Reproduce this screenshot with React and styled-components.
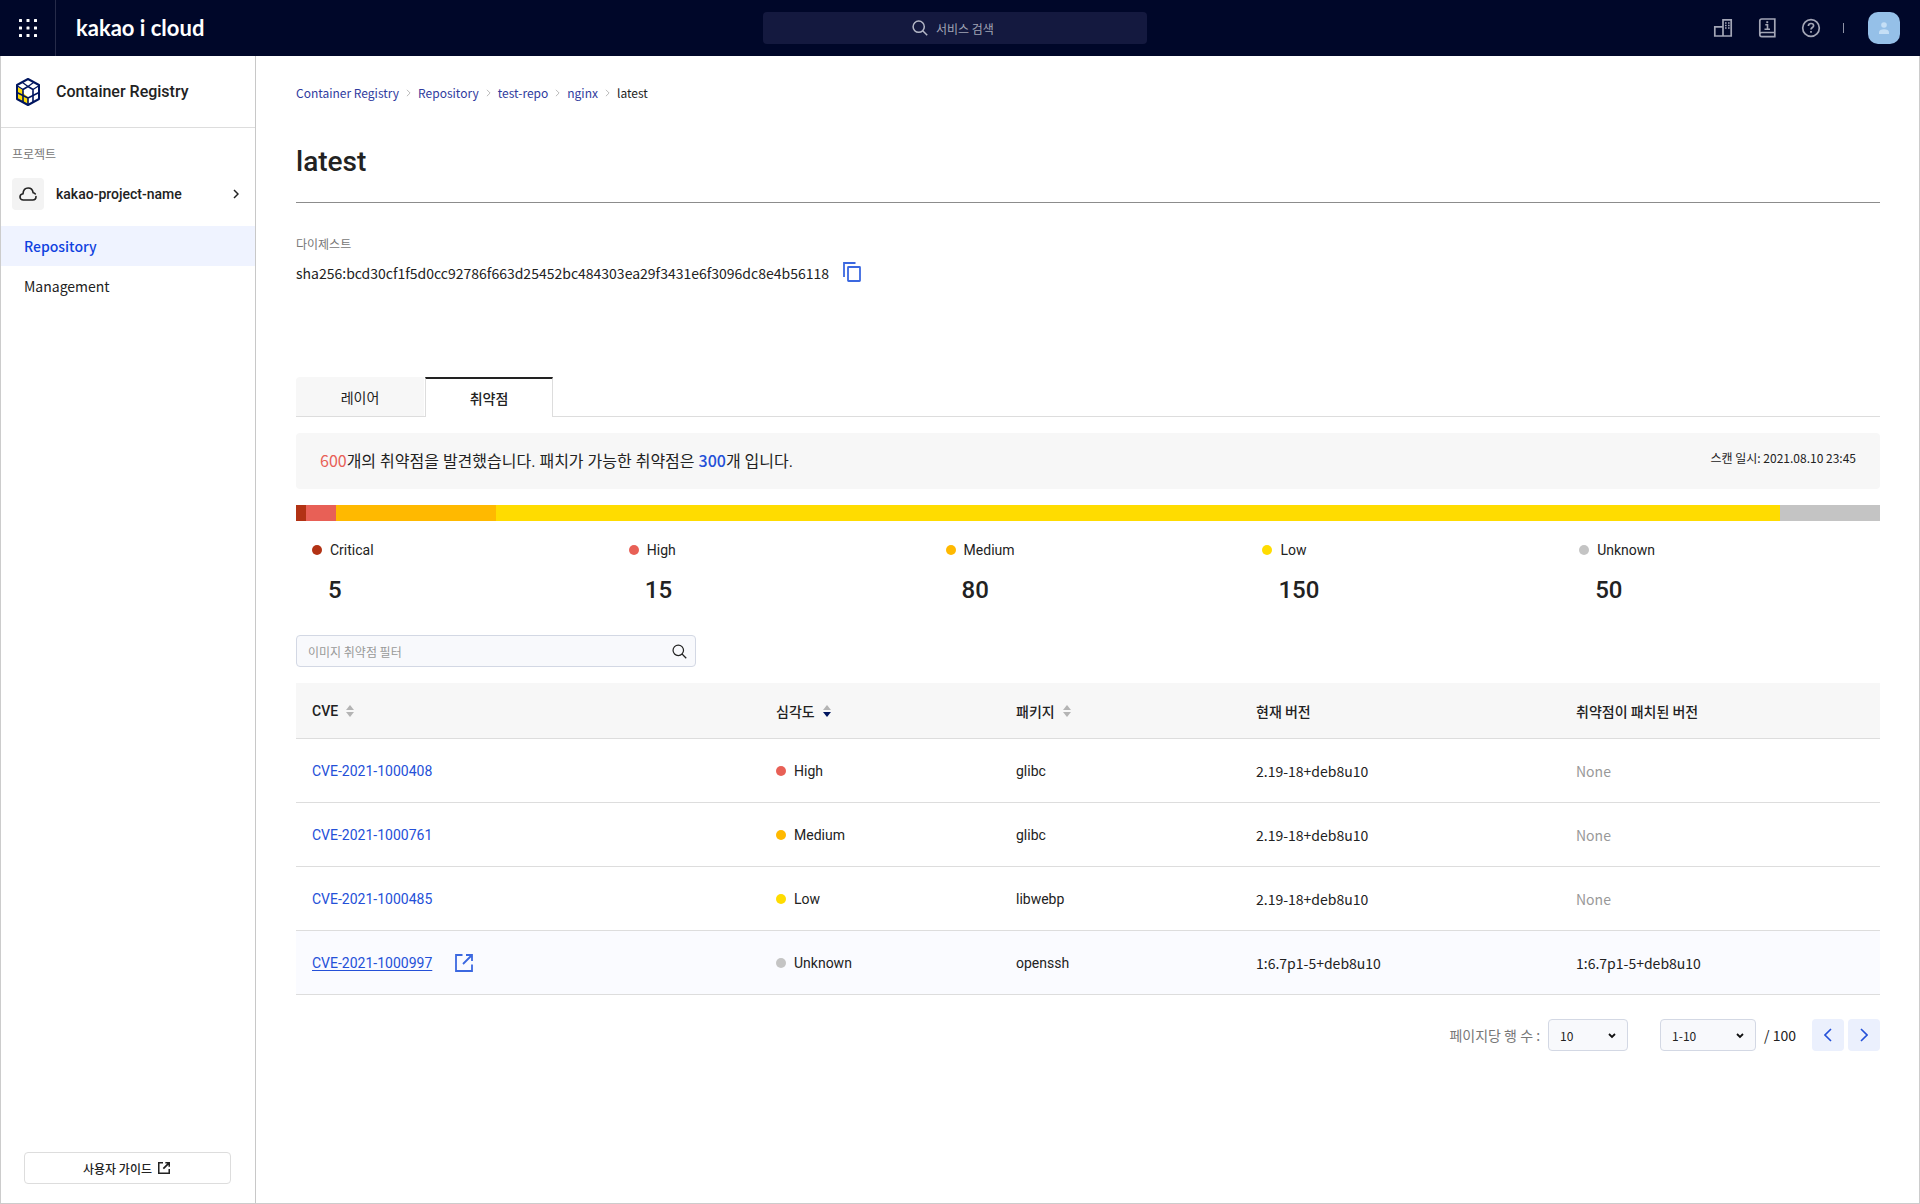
import React, { useState } from 'react';
import styled, { createGlobalStyle } from 'styled-components';

const noto = `'Noto Sans CJK KR', 'Noto Sans', sans-serif`;
const roboto = `Roboto, 'Noto Sans CJK KR', sans-serif`;

const GlobalStyle = createGlobalStyle`
  * {
    box-sizing: border-box;
  }
  body {
    margin: 0;
    color: #222;
    background: #fff;
    font-family: ${noto};
    font-size: 14px;
    line-height: 20px;
  }
  button, input, select {
    font-family: inherit;
    color: inherit;
  }
  svg {
    display: block;
    flex: none;
  }
`;

const Page = styled.div`
  display: flex;
  flex-direction: column;
  min-height: 100vh;
`;

/* top bar */
const Header = styled.header`
  display: grid;
  grid-template-columns: 1fr 384px 1fr;
  align-items: center;
  height: 56px;
  padding-right: 10px;
  background: #000729;
  color: #fff;
`;
const Brand = styled.div`
  display: flex;
  align-items: center;
  height: 56px;
`;
const AppsButton = styled.button`
  display: flex;
  align-items: center;
  justify-content: center;
  width: 56px;
  height: 56px;
  padding: 0;
  border: 0;
  border-right: 1px solid #262b49;
  background: none;
`;
const Logo = styled.a`
  margin-left: 20px;
  font-family: Lato, sans-serif;
  font-size: 22px;
  font-weight: 700;
  line-height: 28px;
  color: #fff;
  text-decoration: none;
`;
const SearchBox = styled.label`
  display: flex;
  align-items: center;
  justify-content: center;
  gap: 8px;
  height: 32px;
  border-radius: 4px;
  background: #14193f;
  color: #b4b7c6;
`;
const SearchInput = styled.input`
  width: 62px;
  padding: 0;
  border: 0;
  outline: 0;
  background: none;
  font-size: 12px;
  &::placeholder {
    color: #a1a4b5;
  }
`;
const Tools = styled.div`
  display: flex;
  align-items: center;
  justify-content: flex-end;
  gap: 24px;
  padding-right: 10px;
`;
const ToolButton = styled.button`
  width: 20px;
  height: 20px;
  padding: 0;
  border: 0;
  background: none;
  color: #a3a6b6;
`;
const Separator = styled.span`
  width: 1px;
  height: 10px;
  margin-left: -2px;
  background: #8f93a6;
`;
const Avatar = styled.button`
  display: flex;
  align-items: center;
  justify-content: center;
  width: 32px;
  height: 32px;
  padding: 0;
  border: 0;
  border-radius: 10px;
  background: #95c0e8;
`;

const Body = styled.div`
  display: flex;
  flex: 1;
  border: 1px solid #ccc;
  border-top: 0;
`;

/* side menu */
const Sidebar = styled.aside`
  display: flex;
  flex-direction: column;
  flex: none;
  width: 255px;
  border-right: 1px solid #c8c8c8;
`;
const ServiceTitle = styled.div`
  display: flex;
  align-items: center;
  gap: 16px;
  height: 72px;
  padding-left: 15px;
  border-bottom: 1px solid #ddd;
  font-family: ${roboto};
  font-size: 16px;
  font-weight: 500;
`;
const ProjectLabel = styled.span`
  margin: 16px 0 14px 11px;
  font-size: 12px;
  color: #777;
`;
const ProjectButton = styled.button`
  display: flex;
  align-items: center;
  gap: 12px;
  margin-bottom: 16px;
  padding: 0 16px 0 11px;
  border: 0;
  background: none;
  font-family: ${roboto};
  font-size: 14px;
  font-weight: 500;
  line-height: 20px;
  text-align: left;
`;
const ProjectIcon = styled.span`
  display: flex;
  align-items: center;
  justify-content: center;
  width: 32px;
  height: 32px;
  border-radius: 4px;
  background: #f3f3f3;
`;
const ProjectName = styled.span`
  flex: 1;
`;
const MenuItem = styled.a`
  padding: 10px 23px;
  font-size: 14px;
  font-weight: ${(props) => (props.$active ? 500 : 400)};
  color: ${(props) => (props.$active ? '#0f42e0' : '#222')};
  background: ${(props) => (props.$active ? '#eff3ff' : 'none')};
  text-decoration: none;
`;
const GuideButton = styled.button`
  display: flex;
  align-items: center;
  justify-content: center;
  gap: 6px;
  height: 32px;
  margin: auto 24px 19px 23px;
  padding: 0 8px 0 6px;
  border: 1px solid #ddd;
  border-radius: 4px;
  background: #fff;
  font-size: 12px;
  font-weight: 500;
`;

/* content */
const Main = styled.main`
  flex: 1;
  min-width: 0;
  padding: 28px 39px 28px 40px;
`;
const Breadcrumb = styled.nav`
  display: flex;
  align-items: center;
  gap: 7px;
  font-size: 12px;
  line-height: 18px;
`;
const Crumb = styled.a`
  color: #2f3b9e;
  text-decoration: none;
`;
const Title = styled.h1`
  margin: 0;
  padding: 40px 0 20px;
  border-bottom: 1px solid #8c8c8c;
  font-family: ${roboto};
  font-size: 28px;
  font-weight: 500;
  line-height: 40px;
`;
const Digest = styled.div`
  margin: 32px 0 92px;
`;
const DigestLabel = styled.div`
  margin-bottom: 8px;
  font-size: 12px;
  line-height: 18px;
  color: #777;
`;
const DigestValue = styled.div`
  display: flex;
  align-items: center;
  gap: 14px;
  height: 24px;
`;
const CopyButton = styled.button`
  padding: 0 0 2px;
  border: 0;
  background: none;
`;

const Tabs = styled.div`
  display: flex;
  gap: 1px;
  height: 40px;
  margin-bottom: 16px;
  border-bottom: 1px solid #ddd;
`;
const Tab = styled.button`
  width: 128px;
  height: ${(props) => (props.$active ? 40 : 39)}px;
  padding: 0;
  border: solid #ddd;
  border-width: ${(props) => (props.$active ? '2px 1px 0' : '0')};
  border-top-color: #222;
  border-radius: ${(props) => (props.$active ? '0' : '4px 0 0 0')};
  background: ${(props) => (props.$active ? '#fff' : '#f7f7f7')};
  font-size: 14px;
  font-weight: ${(props) => (props.$active ? 500 : 400)};
`;

const Banner = styled.div`
  display: flex;
  align-items: center;
  justify-content: space-between;
  height: 56px;
  margin-bottom: 16px;
  padding: 0 24px;
  border-radius: 4px;
  background: #f7f7f7;
`;
const BannerText = styled.span`
  font-family: ${roboto};
  font-size: 16px;
`;
const Count = styled.span`
  color: ${(props) => props.$color};
  font-family: ${noto};
  font-weight: ${(props) => (props.$strong ? 500 : 400)};
`;
const ScanDate = styled.span`
  padding-bottom: 6px;
  font-size: 12px;
`;

const Bar = styled.div`
  display: flex;
  height: 16px;
`;
const Segment = styled.div`
  flex: ${(props) => props.$grow} 1 0;
  background: ${(props) => props.$color};
`;
const Summary = styled.div`
  display: grid;
  grid-template-columns: repeat(5, 1fr);
  padding: 19px 0 28px;
  font-family: ${roboto};
`;
const SummaryItem = styled.div`
  padding-left: 16px;
`;
const Severity = styled.span`
  display: flex;
  align-items: center;
  gap: 8px;
  font-family: ${roboto};
`;
const Dot = styled.i`
  width: 10px;
  height: 10px;
  border-radius: 50%;
  background: ${(props) => props.$color};
`;
const SummaryCount = styled.div`
  margin-top: 13px;
  padding-left: 16px;
  font-size: 24px;
  font-weight: 500;
  line-height: 34px;
`;

const Filter = styled.label`
  display: flex;
  align-items: center;
  width: 400px;
  height: 32px;
  margin-bottom: 16px;
  padding: 0 8px 0 11px;
  border: 1px solid #d3d8e4;
  border-radius: 4px;
  background: #f8f9fc;
`;
const FilterInput = styled.input`
  flex: 1;
  padding: 0;
  border: 0;
  outline: 0;
  background: none;
  font-size: 12px;
  &::placeholder {
    color: #999;
  }
`;

const Table = styled.table`
  width: 100%;
  table-layout: fixed;
  border-spacing: 0;
`;
const Th = styled.th`
  width: ${(props) => (props.$width ? `${props.$width}px` : 'auto')};
  height: 56px;
  padding: 0 16px;
  border-bottom: 1px solid #ddd;
  background: #f7f7f7;
  font-family: ${(props) => (props.$latin ? roboto : noto)};
  font-size: 14px;
  font-weight: 500;
  text-align: left;
`;
const SortButton = styled.button`
  display: flex;
  align-items: center;
  gap: 8px;
  padding: 0;
  border: 0;
  background: none;
  font: inherit;
  line-height: 20px;
`;
const Tr = styled.tr`
  background: ${(props) => (props.$active ? '#fafbff' : '#fff')};
`;
const Td = styled.td`
  height: 64px;
  padding: 0 16px;
  border-bottom: 1px solid #ddd;
  font-family: ${(props) => (props.$latin ? roboto : noto)};
  color: ${(props) => (props.$muted ? '#999' : '#222')};
`;
const CveCell = styled.div`
  display: flex;
  align-items: center;
  gap: 23px;
`;
const CveLink = styled.a`
  color: #2450d8;
  text-decoration: ${(props) => (props.$active ? 'underline' : 'none')};
  text-underline-offset: 2px;
`;

const Pagination = styled.div`
  display: flex;
  align-items: center;
  justify-content: flex-end;
  gap: 8px;
  margin-top: 24px;
`;
const RowsLabel = styled.label`
  color: #777;
`;
const SelectWrap = styled.span`
  position: relative;
  width: ${(props) => props.$width}px;
  svg {
    position: absolute;
    top: 14px;
    right: 12px;
    pointer-events: none;
  }
`;
const RowsSelect = styled(SelectWrap)`
  margin-right: 24px;
`;
const Select = styled.select`
  display: block;
  appearance: none;
  width: 100%;
  height: 32px;
  padding: 0 11px;
  border: 1px solid #d3d8e4;
  border-radius: 4px;
  background: #f8f9fc;
  font-size: 12px;
`;
const Pager = styled.div`
  display: flex;
  gap: 4px;
  margin-left: 8px;
`;
const PageButton = styled.button`
  display: flex;
  align-items: center;
  justify-content: center;
  width: 32px;
  height: 32px;
  padding: 0;
  border: 0;
  border-radius: 4px;
  background: #ebf0fd;
`;

const AppsIcon = () => (
  <svg width="18" height="18" viewBox="0 0 18 18" fill="#fff">
    {[0, 7.5, 15].map((y) =>
      [0, 7.5, 15].map((x) => <rect key={`${x}-${y}`} x={x} y={y} width="3" height="3" rx="0.5" />)
    )}
  </svg>
);

const SearchIcon = ({ size, width }) => (
  <svg width={size} height={size} viewBox="0 0 16 16" fill="none" stroke="currentColor" strokeWidth={width}>
    <circle cx="6.7" cy="6.7" r="5.6" />
    <path d="M10.7 10.7l4.5 4.5" />
  </svg>
);

const BuildingIcon = () => (
  <svg width="20" height="20" viewBox="0 0 20 20" fill="none" stroke="currentColor" strokeWidth="1.7">
    <path d="M10 18V1.8h8.2V18H1.8V8.8H10" />
    <path d="M12 5h1.6M15 5h1.6M12 7.5h1.6M15 7.5h1.6M12 10h1.6M15 10h1.6" strokeWidth="1.3" />
  </svg>
);

const BookIcon = () => (
  <svg width="20" height="20" viewBox="0 0 20 20" fill="none" stroke="currentColor" strokeWidth="1.7">
    <path d="M2.8 16V3c0-1.3.7-2 2-2h13v13.500H4.800c-1.200 0-2 .7-2 2s.8 2.200 2 2.200h13v-4.500" />
    <path d="M8.300 6.800h2.200V11M7.500 11.300h5.500" strokeWidth="1.600" />
    <path d="M9.300 4.200h1.900" strokeWidth="1.900" />
  </svg>
);

const HelpIcon = () => (
  <svg width="20" height="20" viewBox="0 0 20 20" fill="none" stroke="currentColor" strokeWidth="1.7">
    <circle cx="10" cy="10" r="8.3" />
    <path d="M7.400 8c0-1.500 1.100-2.500 2.600-2.500s2.600.9 2.600 2.200c0 1.800-2.600 1.900-2.600 3.900" />
    <path d="M10 13v1.800" />
  </svg>
);

const UserIcon = () => (
  <svg width="12" height="12" viewBox="0 0 12 12" fill="#c5dff6">
    <circle cx="6" cy="3" r="2.8" />
    <path d="M1 12v-1.600c0-2 2.200-3.100 5-3.100s5 1.100 5 3.100V12z" />
  </svg>
);

const CubeIcon = () => (
  <svg width="24" height="28" viewBox="0 0 24 28" fill="none" stroke="#00155f" strokeWidth="1.6" strokeLinejoin="round">
    <path d="M12 1l11 6v14l-11 6-11-6V7z" fill="#fff" stroke="none" />
    <path d="M1 8.500L7 12v3l5 4v8L1 21z" fill="#ffde00" stroke="none" />
    <path d="M3 8.500l4-2 5 3-4.500 3.500z" fill="#fff" stroke="none" />
    <path d="M1 14.500l6 3 5 2.500 5-2.500 6-3M12 20v7" />
    <path d="M7 24V11.500L12 8.500l5 3V24" />
    <path d="M12 8.500L6.500 4.500M12 8.500l5.500-4M7 11.500L1.500 8M17 11.500L22.500 8" strokeWidth="1.3" />
    <path d="M12 1l11 6v14l-11 6-11-6V7z" strokeWidth="2" />
  </svg>
);

const CloudIcon = () => (
  <svg width="18" height="14" viewBox="0 0 18 14" fill="none" stroke="#222" strokeWidth="1.6" strokeLinecap="round">
    <path d="M17 9.500c0 2-1.400 3.500-3.300 3.500H4.300C2.400 13 1 11.700 1 9.900s1.300-3 3-3.200C4.300 3.300 6.300 1 9.100 1c2.700 0 4.600 1.900 5 4.700 1 .2 1.700.6 2.200 1.200" />
  </svg>
);

const ChevronRight = ({ size, color, width = 1.5 }) => (
  <svg width={size / 2 + 1} height={size} viewBox="0 0 6 10" fill="none" stroke={color} strokeWidth={width}>
    <path d="M1 1l4 4-4 4" />
  </svg>
);

const ChevronDown = () => (
  <svg width="8" height="6" viewBox="0 0 8 6" fill="none" stroke="#111" strokeWidth="1.8">
    <path d="M1 1l3 3 3-3" />
  </svg>
);

const PageChevron = ({ d }) => (
  <svg width="8" height="14" viewBox="0 0 8 14" fill="none" stroke="#2450d8" strokeWidth="1.6">
    <path d={d} />
  </svg>
);

const CopyIcon = () => (
  <svg width="18" height="20" viewBox="0 0 18 20" fill="none" stroke="#3b68e0" strokeWidth="1.8">
    <path d="M1 15V1h11.500" />
    <rect x="5" y="5" width="12" height="14" rx="0.5" />
  </svg>
);

const OpenIcon = ({ size, color, width }) => (
  <svg width={size} height={size} viewBox="0 0 18 18" fill="none" stroke={color} strokeWidth={width}>
    <path d="M7.500 1H1v16h16v-6.500M11 1h6v6M17 1L8 10" />
  </svg>
);

const SortIcon = ({ down }) => (
  <svg width="8" height="12" viewBox="0 0 8 12">
    <path d="M4 0l4 5H0z" fill="#b4b4b4" />
    <path d="M4 12l4-5H0z" fill={down ? '#00155f' : '#b4b4b4'} />
  </svg>
);

const colors = {
  Critical: '#b23214',
  High: '#e86056',
  Medium: '#ffb900',
  Low: '#ffdc00',
  Unknown: '#c4c4c4',
};

const summary = [
  { name: 'Critical', count: 5, share: 10 },
  { name: 'High', count: 15, share: 30 },
  { name: 'Medium', count: 80, share: 160 },
  { name: 'Low', count: 150, share: 1284 },
  { name: 'Unknown', count: 50, share: 100 },
];

const rows = [
  { cve: 'CVE-2021-1000408', severity: 'High', pkg: 'glibc', version: '2.19-18+deb8u10' },
  { cve: 'CVE-2021-1000761', severity: 'Medium', pkg: 'glibc', version: '2.19-18+deb8u10' },
  { cve: 'CVE-2021-1000485', severity: 'Low', pkg: 'libwebp', version: '2.19-18+deb8u10' },
  {
    cve: 'CVE-2021-1000997',
    severity: 'Unknown',
    pkg: 'openssh',
    version: '1:6.7p1-5+deb8u10',
    fixed: '1:6.7p1-5+deb8u10',
    active: true,
  },
];

const App = () => {
  const [tab, setTab] = useState('취약점');
  return (
    <Page>
      <GlobalStyle />
      <Header>
        <Brand>
          <AppsButton aria-label="전체 서비스"><AppsIcon /></AppsButton>
          <Logo href="#">kakao i cloud</Logo>
        </Brand>
        <SearchBox>
          <SearchIcon size={16} width={1.5} />
          <SearchInput placeholder="서비스 검색" aria-label="서비스 검색" />
        </SearchBox>
        <Tools>
          <ToolButton aria-label="조직"><BuildingIcon /></ToolButton>
          <ToolButton aria-label="문서"><BookIcon /></ToolButton>
          <ToolButton aria-label="도움말"><HelpIcon /></ToolButton>
          <Separator />
          <Avatar aria-label="내 계정"><UserIcon /></Avatar>
        </Tools>
      </Header>
      <Body>
        <Sidebar>
          <ServiceTitle>
            <CubeIcon />
            Container Registry
          </ServiceTitle>
          <ProjectLabel>프로젝트</ProjectLabel>
          <ProjectButton>
            <ProjectIcon><CloudIcon /></ProjectIcon>
            <ProjectName>kakao-project-name</ProjectName>
            <ChevronRight size={10} color="#222" />
          </ProjectButton>
          <MenuItem href="#" $active>Repository</MenuItem>
          <MenuItem href="#">Management</MenuItem>
          <GuideButton>
            사용자 가이드
            <OpenIcon size={12} color="#222" width={2.6} />
          </GuideButton>
        </Sidebar>
        <Main>
          <Breadcrumb>
            {['Container Registry', 'Repository', 'test-repo', 'nginx'].map((crumb) => (
              <React.Fragment key={crumb}>
                <Crumb href="#">{crumb}</Crumb>
                <ChevronRight size={8} color="#aaa" width={1} />
              </React.Fragment>
            ))}
            <span>latest</span>
          </Breadcrumb>
          <Title>latest</Title>
          <Digest>
            <DigestLabel>다이제스트</DigestLabel>
            <DigestValue>
              sha256:bcd30cf1f5d0cc92786f663d25452bc484303ea29f3431e6f3096dc8e4b56118
              <CopyButton aria-label="복사"><CopyIcon /></CopyButton>
            </DigestValue>
          </Digest>
          <Tabs role="tablist">
            {['레이어', '취약점'].map((name) => (
              <Tab key={name} role="tab" aria-selected={tab === name} $active={tab === name} onClick={() => setTab(name)}>
                {name}
              </Tab>
            ))}
          </Tabs>
          <Banner>
            <BannerText>
              <Count $color="#e86056">600</Count>개의 취약점을 발견했습니다. 패치가 가능한 취약점은{' '}
              <Count $color="#2450d8" $strong>300</Count>개 입니다.
            </BannerText>
            <ScanDate>스캔 일시: 2021.08.10 23:45</ScanDate>
          </Banner>
          <Bar>
            {summary.map((item) => (
              <Segment key={item.name} $grow={item.share} $color={colors[item.name]} />
            ))}
          </Bar>
          <Summary>
            {summary.map((item) => (
              <SummaryItem key={item.name}>
                <Severity><Dot $color={colors[item.name]} />{item.name}</Severity>
                <SummaryCount>{item.count}</SummaryCount>
              </SummaryItem>
            ))}
          </Summary>
          <Filter>
            <FilterInput placeholder="이미지 취약점 필터" aria-label="이미지 취약점 필터" />
            <SearchIcon size={15} width={1.3} />
          </Filter>
          <Table>
            <thead>
              <tr>
                <Th $latin><SortButton>CVE <SortIcon /></SortButton></Th>
                <Th $width={240}><SortButton>심각도 <SortIcon down /></SortButton></Th>
                <Th $width={240}><SortButton>패키지 <SortIcon /></SortButton></Th>
                <Th $width={320}>현재 버전</Th>
                <Th $width={320}>취약점이 패치된 버전</Th>
              </tr>
            </thead>
            <tbody>
              {rows.map((row) => (
                <Tr key={row.cve} $active={row.active}>
                  <Td $latin>
                    <CveCell>
                      <CveLink href="#" $active={row.active}>{row.cve}</CveLink>
                      {row.active && <OpenIcon size={18} color="#3b68e0" width={1.8} />}
                    </CveCell>
                  </Td>
                  <Td $latin><Severity><Dot $color={colors[row.severity]} />{row.severity}</Severity></Td>
                  <Td $latin>{row.pkg}</Td>
                  <Td>{row.version}</Td>
                  <Td $muted={!row.fixed}>{row.fixed || 'None'}</Td>
                </Tr>
              ))}
            </tbody>
          </Table>
          <Pagination>
            <RowsLabel htmlFor="rows">페이지당 행 수 :</RowsLabel>
            <RowsSelect $width={80}>
              <Select id="rows"><option>10</option></Select>
              <ChevronDown />
            </RowsSelect>
            <SelectWrap $width={96}>
              <Select aria-label="페이지"><option>1-10</option></Select>
              <ChevronDown />
            </SelectWrap>
            <span>/ 100</span>
            <Pager>
              <PageButton aria-label="이전"><PageChevron d="M7 1L1 7l6 6" /></PageButton>
              <PageButton aria-label="다음"><PageChevron d="M1 1l6 6-6 6" /></PageButton>
            </Pager>
          </Pagination>
        </Main>
      </Body>
    </Page>
  );
};

export default App;
